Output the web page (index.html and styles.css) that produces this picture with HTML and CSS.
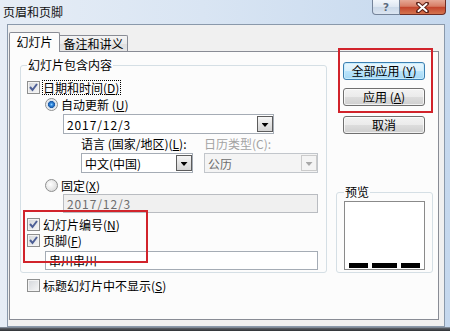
FILE: index.html
```html
<!DOCTYPE html>
<html lang="zh-CN">
<head>
<meta charset="utf-8">
<title>页眉和页脚</title>
<link rel="stylesheet" href="styles.css">
</head>
<body>
<div class="window">
  <div class="titlebar">
    <div class="title">页眉和页脚</div>
    <div class="caption">
      <div class="cbtn help">?</div>
      <div class="cbtn close">
        <svg width="13" height="11" viewBox="0 0 13 11"><path d="M2 1.5 L11 9.5 M11 1.5 L2 9.5" stroke="#5b2118" stroke-width="4" stroke-linecap="round"/><path d="M2.5 2 L10.5 9 M10.5 2 L2.5 9" stroke="#fff" stroke-width="2" stroke-linecap="round"/></svg>
      </div>
    </div>
  </div>
  <div class="client">
    <div class="tabs">
      <div class="tab active">幻灯片</div>
      <div class="tab inactive">备注和讲义</div>
    </div>
    <div class="panel">
      <div class="left">
        <fieldset class="group">
          <legend>幻灯片包含内容</legend>
          <div class="row r-date">
            <span class="chk on"><svg viewBox="0 0 11 11"><path d="M2 5 L4.5 8 L9 2" fill="none" stroke="#4d5f96" stroke-width="2"/></svg></span>
            <span class="focus">日期和时间(<u>D</u>)</span>
          </div>
          <div class="row r-auto">
            <span class="radio on"></span>
            <span>自动更新 (<u>U</u>)</span>
          </div>
          <div class="combo date-combo">
            <span class="txt num">2017/12/3</span>
            <span class="dd"></span>
          </div>
          <div class="row r-labels">
            <span class="lang-label">语言 (国家/地区)(<u>L</u>):</span>
            <span class="muted">日历类型(C):</span>
          </div>
          <div class="row r-combos">
            <div class="combo lang-combo">
              <span class="txt">中文(中国)</span>
              <span class="dd"></span>
            </div>
            <div class="combo cal-combo disabled">
              <span class="txt">公历</span>
              <span class="dd"></span>
            </div>
          </div>
          <div class="row r-fixed">
            <span class="radio"></span>
            <span>固定(<u>X</u>)</span>
          </div>
          <div class="field fixed-field num">2017/12/3</div>
          <div class="row r-num">
            <span class="chk on"><svg viewBox="0 0 11 11"><path d="M2 5 L4.5 8 L9 2" fill="none" stroke="#4d5f96" stroke-width="2"/></svg></span>
            <span>幻灯片编号(<u>N</u>)</span>
          </div>
          <div class="row r-foot">
            <span class="chk on"><svg viewBox="0 0 11 11"><path d="M2 5 L4.5 8 L9 2" fill="none" stroke="#4d5f96" stroke-width="2"/></svg></span>
            <span>页脚(<u>F</u>)</span>
          </div>
          <div class="field footer-field">串川串川</div>
        </fieldset>
        <div class="row r-hide">
          <span class="chk"></span>
          <span>标题幻灯片中不显示(<u>S</u>)</span>
        </div>
      </div>
      <div class="right">
        <div class="btn default">全部应用 (<u>Y</u>)</div>
        <div class="btn apply">应用 (<u>A</u>)</div>
        <div class="btn cancel">取消</div>
        <fieldset class="pgroup">
          <legend>预览</legend>
          <div class="preview">
            <span class="bar b1"></span>
            <span class="bar b2"></span>
            <span class="bar b3"></span>
          </div>
        </fieldset>
      </div>
    </div>
  </div>
  <div class="frame-bottom"></div>
  <div class="mark mark1"></div>
  <div class="mark mark2"></div>
</div>
</body>
</html>
```

FILE: styles.css
```css
* { box-sizing: border-box; }
html, body { margin: 0; padding: 0; }
body {
  width: 450px;
  height: 331px;
  overflow: hidden;
  font-family: "Noto Sans CJK SC", "Noto Sans", sans-serif;
  font-size: 12px;
  color: #000;
}
u { text-decoration: underline; text-underline-offset: 1px; }
.num { letter-spacing: 0.9px; }

.window {
  position: relative;
  width: 450px;
  height: 331px;
  display: flex;
  flex-direction: column;
  background: linear-gradient(90deg, #e6edf6 0%, #d9e5f3 45%, #c5d8ee 100%);
}

.titlebar {
  height: 24px;
  flex: none;
  display: flex;
  justify-content: space-between;
  align-items: flex-start;
}
.title {
  padding: 5px 0 0 3px;
  line-height: 14px;
  font-size: 12px;
  color: #111;
}
.caption { display: flex; margin-right: 4px; }
.cbtn {
  height: 15px;
  display: flex;
  align-items: center;
  justify-content: center;
}
.help {
  width: 28px;
  border: 1px solid #75849a;
  border-top: none;
  border-radius: 0 0 0 4px;
  background: linear-gradient(#f2f6fb, #dde6f1 50%, #cbd8e8 51%, #dbe5f1);
  font-weight: bold;
  font-family: "DejaVu Sans", sans-serif;
  font-size: 11px;
  color: #5b6b80;
  text-shadow: 0 0 1px #fff;
}
.close {
  width: 46px;
  border: 1px solid #6e2d25;
  border-left: none;
  border-top: none;
  border-radius: 0 0 4px 0;
  background: linear-gradient(#e6a896, #d77d65 45%, #c3452d 52%, #d4744f);
}

.client {
  flex: none;
  height: 303px;
  margin: 0 5px 0 7px;
  border: 1px solid #8a99ab;
  background: #f0f0f0;
  padding: 7px 0 0 1px;
}

.tabs {
  display: flex;
  align-items: flex-end;
  height: 19px;
  position: relative;
  z-index: 1;
}
.tab {
  border: 1px solid #898c95;
  border-bottom: none;
  text-align: center;
  white-space: nowrap;
}
.tab.active {
  width: 51px;
  height: 20px;
  margin-bottom: -1px;
  background: #fcfcfc;
  line-height: 18px;
  border-radius: 2px 2px 0 0;
}
.tab.inactive {
  width: 68px;
  height: 16px;
  border-left: none;
  border-radius: 0 2px 0 0;
  background: linear-gradient(#f4f4f4, #ebebeb 50%, #dedede 51%, #e6e6e6);
  line-height: 15px;
}

.panel {
  width: 430px;
  height: 269px;
  border: 1px solid #898c95;
  background: #fcfcfc;
  display: flex;
  padding-left: 10px;
}

.left {
  width: 307px;
  flex: none;
  display: flex;
  flex-direction: column;
}
.group {
  margin: 6px 0 0;
  padding: 7px 0 2px 6px;
  border: 1px solid #d5dfe5;
  border-radius: 3px;
  width: 307px;
  min-width: 0;
}
.group legend, .pgroup legend {
  padding: 0 1px;
  line-height: 14px;
}

.row {
  display: flex;
  align-items: center;
  height: 16px;
  white-space: nowrap;
}

.chk {
  width: 13px;
  height: 13px;
  flex: none;
  margin-right: 3px;
  border: 1px solid #8e8f8f;
  background: linear-gradient(135deg, #d3d6da, #f7f7f7);
  box-shadow: inset 0 0 0 1px #f3f3f3;
  display: flex;
  align-items: center;
  justify-content: center;
}
.chk svg { width: 11px; height: 11px; display: block; }

.radio {
  width: 13px;
  height: 13px;
  flex: none;
  margin-right: 3px;
  border: 1px solid #8e8f8f;
  border-radius: 50%;
  background: radial-gradient(circle at 40% 40%, #ffffff 0, #e4e4e4 60%, #cfcfcf 100%);
}
.radio.on {
  background: radial-gradient(circle at 50% 50%, #8fd0ff 0, #2f86dc 1.5px, #1d5aa6 3.2px, #d7e0ea 3.8px, #f5f7fa 6px);
}

.r-date .chk { margin-right: 2px; }
.focus {
  border: 1px dotted #000;
  line-height: 13px;
  padding-right: 1px;
}
.r-auto { margin: 1px 0 0 18px; }

.combo {
  display: flex;
  align-items: center;
  border: 1px solid #a5acb5;
  background: #fff;
  padding-left: 3px;
  white-space: nowrap;
}
.combo .txt { flex: 1; }
.combo .dd {
  width: 16px;
  height: 16px;
  flex: none;
  border: 1px solid #5c5c5c;
  background: linear-gradient(#f6f6f6, #e4e4e4 50%, #d4d4d4);
  display: flex;
  align-items: center;
  justify-content: center;
}
.combo .dd::before {
  content: "";
  width: 7px;
  height: 4px;
  margin-top: 2px;
  background: #000;
  clip-path: polygon(0 0, 100% 0, 50% 100%);
}
.combo.disabled {
  border-color: #c2c6cb;
  background: #f4f4f4;
  color: #6d6d6d;
}
.combo.disabled .dd {
  border-color: #cbcbcb;
  background: #f4f4f4;
}
.combo.disabled .dd::before { background: #a8a8a8; }

.date-combo {
  margin: 2px 0 0 36px;
  width: 211px;
  height: 20px;
}
.r-labels { margin: 1px 0 0 54px; }
.lang-label { width: 123px; }
.muted { color: #a3a3a3; }
.r-combos {
  margin: 2px 0 0 54px;
  height: 20px;
  gap: 11px;
}
.lang-combo { width: 112px; height: 20px; }
.cal-combo { width: 114px; height: 20px; }

.r-fixed { margin: 4px 0 0 18px; }

.field {
  height: 19px;
  line-height: 17px;
  padding-left: 3px;
  border: 1px solid #a5acb5;
  background: #fff;
  white-space: nowrap;
}
.fixed-field {
  margin: 1px 0 0 36px;
  width: 255px;
  background: #f0f0f0;
  border-color: #b9bcc1;
  color: #6d6d6d;
}
.r-num { margin-top: 3px; }
.footer-field {
  margin: 3px 0 0 18px;
  width: 273px;
}

.r-hide { margin: 4px 0 0 7px; }

.right {
  width: 97px;
  flex: none;
  margin-left: 9px;
  padding-top: 10px;
  display: flex;
  flex-direction: column;
}
.btn {
  width: 82px;
  height: 18px;
  margin-left: 7px;
  border: 1px solid #707070;
  border-radius: 3px;
  background: linear-gradient(#f3f3f3 0, #ebebeb 50%, #dddddd 51%, #cfcfcf 100%);
  box-shadow: inset 0 0 0 1px rgba(255, 255, 255, 0.7);
  display: flex;
  align-items: center;
  justify-content: center;
  line-height: 14px;
  white-space: nowrap;
}
.btn.default {
  border-color: #3c7fb1;
  background: linear-gradient(#e9f6fd, #d6effc 50%, #b9e4fc 51%, #a6d8f4);
  box-shadow: inset 0 0 0 1px #c6ecfd;
}
.btn.apply { margin-top: 8px; }
.btn.cancel { margin-top: 10px; }

.pgroup {
  margin: 51px 0 0;
  padding: 2px 0 2px 7px;
  border: 1px solid #d5dfe5;
  border-radius: 3px;
  width: 97px;
  min-width: 0;
}
.preview {
  width: 81px;
  height: 69px;
  border: 1px solid #8a8a8a;
  background: #fff;
  display: flex;
  align-items: flex-end;
  gap: 4px;
  padding: 0 0 1px 4px;
}
.bar { height: 5px; background: #000; flex: none; }
.b1 { width: 19px; }
.b2 { width: 25px; }
.b3 { width: 19px; }

.frame-bottom {
  flex: 1;
  background: linear-gradient(#9aa8b8 0, #5a5f66 30%, #2e3033 100%);
}

.mark {
  position: absolute;
  border: 2px solid #d1232b;
}
.mark1 { left: 23px; top: 210px; width: 125px; height: 53px; }
.mark2 { left: 338px; top: 48px; width: 95px; height: 65px; }
```
